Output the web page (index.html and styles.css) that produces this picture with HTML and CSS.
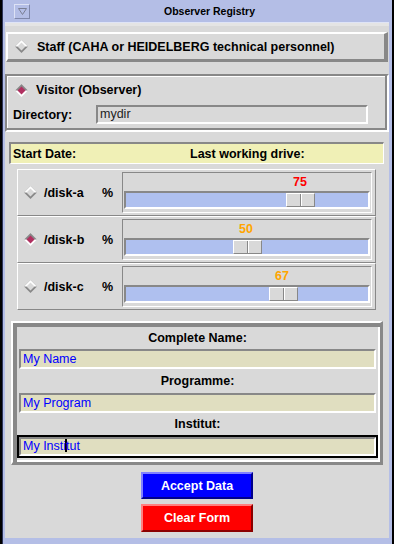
FILE: index.html
```html
<!DOCTYPE html>
<html lang="en">
<head>
  <meta charset="UTF-8" />
  <title>Observer Registry</title>
  <link rel="stylesheet" href="styles.css">
</head>
<body>
  <div class="window">
    <div class="titlebar">
      <span class="title-btn">
        <svg width="9" height="7" viewBox="0 0 9 7"><polygon points="0.5,0.5 8.5,0.5 4.5,6.5" fill="none" stroke="#7a7f94" stroke-width="1"/></svg>
      </span>
      <span class="title">Observer Registry</span>
    </div>

    <div class="content">
      <div class="staff">
        <svg class="radio" width="13" height="13" viewBox="0 0 13 13">
          <polygon points="6.5,0 13,6.5 6.5,13 0,6.5" fill="#888"/>
          <polygon points="0,6.5 6.5,0 13,6.5" fill="#fff"/>
          <polygon points="6.5,2.5 10.5,6.5 6.5,10.5 2.5,6.5" fill="#d9d9d9"/>
        </svg>
        <span class="staff-text">Staff (CAHA or HEIDELBERG technical personnel)</span>
      </div>

      <div class="visitor">
        <div class="visitor-row">
          <svg class="radio" width="13" height="13" viewBox="0 0 13 13">
            <polygon points="6.5,0 13,6.5 6.5,13 0,6.5" fill="#fff"/>
            <polygon points="0,6.5 6.5,0 13,6.5" fill="#888"/>
            <polygon points="6.5,2.5 10.5,6.5 6.5,10.5 2.5,6.5" fill="#b03060"/>
          </svg>
          <span class="visitor-text">Visitor (Observer)</span>
        </div>
        <div class="dir-row">
          <span class="dir-label">Directory:</span>
          <div class="entry dir-entry">mydir</div>
        </div>
      </div>

      <div class="infobar">
        <span class="start-date">Start Date:</span>
        <span>Last working drive:</span>
      </div>

      <div class="disks">
        <div class="disk-row">
          <svg class="radio" width="13" height="13" viewBox="0 0 13 13">
            <polygon points="6.5,0 13,6.5 6.5,13 0,6.5" fill="#888"/>
            <polygon points="0,6.5 6.5,0 13,6.5" fill="#fff"/>
            <polygon points="6.5,2.5 10.5,6.5 6.5,10.5 2.5,6.5" fill="#d9d9d9"/>
          </svg>
          <span class="disk-name">/disk-a</span>
          <span class="pct">%</span>
          <div class="scale">
            <div class="scale-value"><span class="value red" style="left:176px">75</span></div>
            <div class="trough"><span class="thumb" style="left:160px"></span></div>
          </div>
        </div>
        <div class="disk-row">
          <svg class="radio" width="13" height="13" viewBox="0 0 13 13">
            <polygon points="6.5,0 13,6.5 6.5,13 0,6.5" fill="#fff"/>
            <polygon points="0,6.5 6.5,0 13,6.5" fill="#888"/>
            <polygon points="6.5,2.5 10.5,6.5 6.5,10.5 2.5,6.5" fill="#b03060"/>
          </svg>
          <span class="disk-name">/disk-b</span>
          <span class="pct">%</span>
          <div class="scale">
            <div class="scale-value"><span class="value orange" style="left:122px">50</span></div>
            <div class="trough"><span class="thumb" style="left:107px"></span></div>
          </div>
        </div>
        <div class="disk-row">
          <svg class="radio" width="13" height="13" viewBox="0 0 13 13">
            <polygon points="6.5,0 13,6.5 6.5,13 0,6.5" fill="#888"/>
            <polygon points="0,6.5 6.5,0 13,6.5" fill="#fff"/>
            <polygon points="6.5,2.5 10.5,6.5 6.5,10.5 2.5,6.5" fill="#d9d9d9"/>
          </svg>
          <span class="disk-name">/disk-c</span>
          <span class="pct">%</span>
          <div class="scale">
            <div class="scale-value"><span class="value orange" style="left:158px">67</span></div>
            <div class="trough"><span class="thumb" style="left:143px"></span></div>
          </div>
        </div>
      </div>

      <div class="form">
        <div class="field-label">Complete Name:</div>
        <div class="entry field">My Name</div>
        <div class="field-label tall">Programme:</div>
        <div class="entry field">My Program</div>
        <div class="field-label">Institut:</div>
        <div class="focus">
          <div class="entry field">My Insti<span class="caret"></span>tut</div>
        </div>
      </div>

      <div class="actions">
        <button class="btn accept">Accept Data</button>
        <button class="btn clear">Clear Form</button>
      </div>
    </div>
  </div>
</body>
</html>
```

FILE: styles.css
```css
body {
  margin: 0;
  width: 394px;
  height: 544px;
  background: #000;
  font: bold 12.5px "Liberation Sans", Arial, sans-serif;
  color: #000;
  overflow: hidden;
}

.window {
  margin-left: 2px;
  width: 390px;
  height: 544px;
  box-sizing: border-box;
  background: #b4bee6;
  border-left: 1px solid #2c3358;
  padding: 0 3px 6px 2px;
  display: flex;
  flex-direction: column;
}

.titlebar {
  height: 22px;
  border-bottom: 1px solid #dfe4f6;
  display: flex;
  align-items: center;
}

.title-btn {
  margin-left: 9px;
  width: 16px;
  height: 15px;
  box-sizing: border-box;
  border: 1px solid;
  border-color: #dde2f5 #7f87aa #7f87aa #dde2f5;
  display: flex;
  align-items: center;
  justify-content: center;
}

.title {
  flex: 1;
  text-align: center;
  font-size: 10.5px;
}

.content {
  flex: 1;
  background: #d9d9d9;
  border-top: 3px solid #e4e4e4;
  display: flex;
  flex-direction: column;
}

.radio {
  flex: none;
  display: block;
}

/* staff toggle */
.staff {
  margin: 6px 1px 0;
  height: 30px;
  box-sizing: border-box;
  border: 2px solid;
  border-width: 2px 4px 3px 2px;
  border-color: #fff #888 #888 #fff;
  display: flex;
  align-items: center;
}

.staff .radio {
  margin-left: 7px;
}

.staff-text {
  margin-left: 9px;
}

/* visitor panel */
.visitor {
  margin-top: 12px;
  height: 58px;
  box-sizing: border-box;
  border: 2px solid;
  border-color: #888 #fff #fff #888;
  box-shadow: inset -2px -2px 0 #888, inset 1px 1px 0 #fff;
  display: flex;
  flex-direction: column;
}

.visitor-row {
  height: 28px;
  display: flex;
  align-items: center;
}

.visitor-row .radio {
  margin-left: 8px;
}

.visitor-text {
  margin-left: 8px;
}

.dir-row {
  display: flex;
  align-items: center;
  padding: 1px 0 0 6px;
}

.dir-label {
  width: 83px;
}

.entry {
  box-sizing: border-box;
  border: 2px solid;
  border-color: #888 #fff #fff #888;
  font-weight: normal;
  padding-left: 2px;
  white-space: nowrap;
}

.dir-entry {
  width: 272px;
  height: 19px;
  line-height: 15px;
  color: #222;
}

/* info bar */
.infobar {
  margin: 10px 5px 0 4px;
  height: 22px;
  box-sizing: border-box;
  background: #f0f0b6;
  border: 1px solid;
  border-width: 2px 1px 1px 2px;
  border-color: #888 #fff #fff #888;
  padding-left: 2px;
  display: flex;
  align-items: center;
}

.start-date {
  width: 177px;
}

/* disks */
.disks {
  margin: 5px 0 0 12px;
  width: 359px;
}

.disk-row {
  height: 47px;
  box-sizing: border-box;
  border: 1px solid;
  border-color: #fff #888 #888 #fff;
  display: flex;
  align-items: center;
}

.disk-row .radio {
  margin-left: 6px;
}

.disk-name {
  margin-left: 7px;
  width: 58px;
}

.pct {
  width: 20px;
}

.scale {
  width: 250px;
  height: 41px;
  box-sizing: border-box;
  border: 1px solid;
  border-color: #888 #fff #fff #888;
  display: flex;
  flex-direction: column;
}

.scale-value {
  position: relative;
  height: 18px;
  margin: 0 1px;
}

.value {
  position: absolute;
  top: 2px;
  transform: translateX(-50%);
  line-height: 14px;
}

.red {
  color: #ff0000;
}

.orange {
  color: #ffa500;
}

.trough {
  position: relative;
  margin: 0 1px;
  height: 18px;
  box-sizing: border-box;
  background: #afc0ef;
  border: 2px solid;
  border-color: #888 #fff #fff #888;
}

.thumb {
  position: absolute;
  top: 0;
  width: 29px;
  height: 14px;
  box-sizing: border-box;
  background: #d9d9d9;
  border: 1px solid;
  border-color: #fff #888 #888 #fff;
  background-image: linear-gradient(to right, transparent 13px, #888 13px, #888 14px, #fff 14px, #fff 15px, transparent 15px);
}

/* name / programme / institute */
.form {
  margin: 11px 0 0 6px;
  width: 372px;
  height: 144px;
  box-sizing: border-box;
  border: 2px solid;
  border-width: 2px 3px 3px 2px;
  border-color: #fff #888 #888 #fff;
  box-shadow: inset 4px 4px 0 #888, inset -2px -2px 0 #fff;
  padding: 4px 2px 0 4px;
  display: flex;
  flex-direction: column;
}

.field-label {
  height: 22px;
  line-height: 22px;
  text-align: center;
}

.field-label.tall {
  height: 24px;
  line-height: 24px;
}

.field {
  margin: 0 2px;
  height: 20px;
  line-height: 16px;
  background: #e0dec0;
  color: #0000ff;
}

.focus {
  height: 23px;
  box-sizing: border-box;
  border: 2px solid #000;
}

.focus .field {
  margin: 0;
  height: 19px;
  line-height: 15px;
}

.caret {
  display: inline-block;
  width: 2px;
  height: 13px;
  margin: 0 -1px;
  background: #000;
  vertical-align: -2px;
}

/* buttons */
.actions {
  display: flex;
  flex-direction: column;
  align-items: center;
}

.btn {
  font: bold 12.5px "Liberation Sans", Arial, sans-serif;
  color: #fff;
  width: 112px;
  padding: 0;
  border: 2px solid;
  cursor: pointer;
}

.accept {
  margin-top: 7px;
  height: 27px;
  background: #0000ff;
  border-color: #8080ff #00008b #00008b #8080ff;
}

.clear {
  margin-top: 5px;
  height: 28px;
  background: #ff0000;
  border-color: #ff8080 #8b0000 #8b0000 #ff8080;
}
```
